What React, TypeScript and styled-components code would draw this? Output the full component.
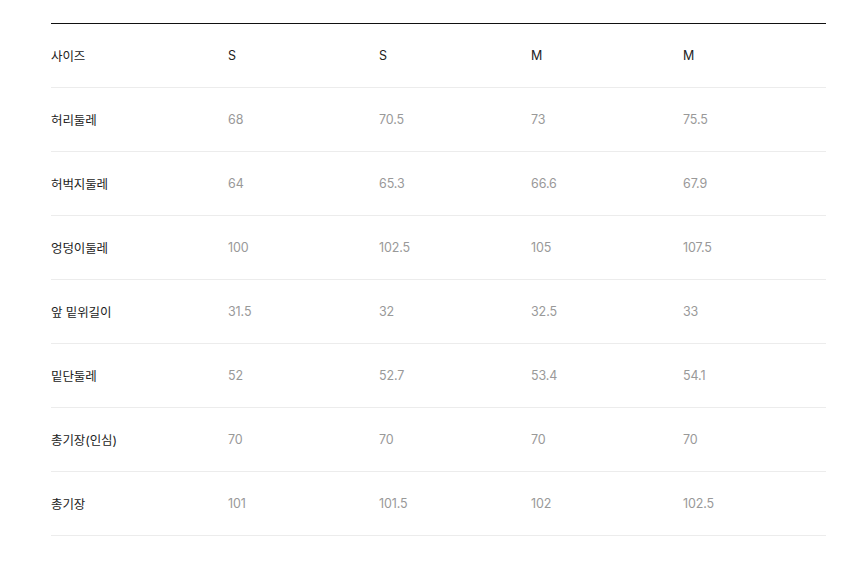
import styled, { createGlobalStyle } from 'styled-components';

const GlobalStyle = createGlobalStyle`
    html, body {
        margin: 0;
        padding: 0;
        background: #ffffff;
    }
    body {
        font-family: Inter, 'Noto Sans CJK KR', sans-serif;
    }
`;

const Page = styled.div`
    padding: 23px 27px 0 51px;
`;

const Table = styled.div`
    border-top: 1px solid #111111;
    width: 775px;
`;

const Row = styled.div`
    display: grid;
    grid-template-columns: 177px 151px 152px 152px 1fr;
    align-items: center;
    height: 63px;
    border-bottom: 1px solid #ececec;
`;

const Cell = styled.div<{ $head?: boolean; $label?: boolean }>`
    font-size: 12.5px;
    letter-spacing: -0.1px;
    color: ${p => (p.$head || p.$label ? '#222222' : '#999999')};
    padding-bottom: ${p => (p.$head ? '0' : '1px')};
`;

const header = ['사이즈', 'S', 'S', 'M', 'M'];

const rows: [string, string[]][] = [
    ['허리둘레', ['68', '70.5', '73', '75.5']],
    ['허벅지둘레', ['64', '65.3', '66.6', '67.9']],
    ['엉덩이둘레', ['100', '102.5', '105', '107.5']],
    ['앞 밑위길이', ['31.5', '32', '32.5', '33']],
    ['밑단둘레', ['52', '52.7', '53.4', '54.1']],
    ['총기장(인심)', ['70', '70', '70', '70']],
    ['총기장', ['101', '101.5', '102', '102.5']],
];

export default function App() {
    return (
        <>
            <GlobalStyle />
            <Page>
                <Table>
                    <Row>
                        {header.map((h, i) => (
                            <Cell key={i} $head>{h}</Cell>
                        ))}
                    </Row>
                    {rows.map(([label, values]) => (
                        <Row key={label}>
                            <Cell $label>{label}</Cell>
                            {values.map((v, i) => (
                                <Cell key={i}>{v}</Cell>
                            ))}
                        </Row>
                    ))}
                </Table>
            </Page>
        </>
    );
}
